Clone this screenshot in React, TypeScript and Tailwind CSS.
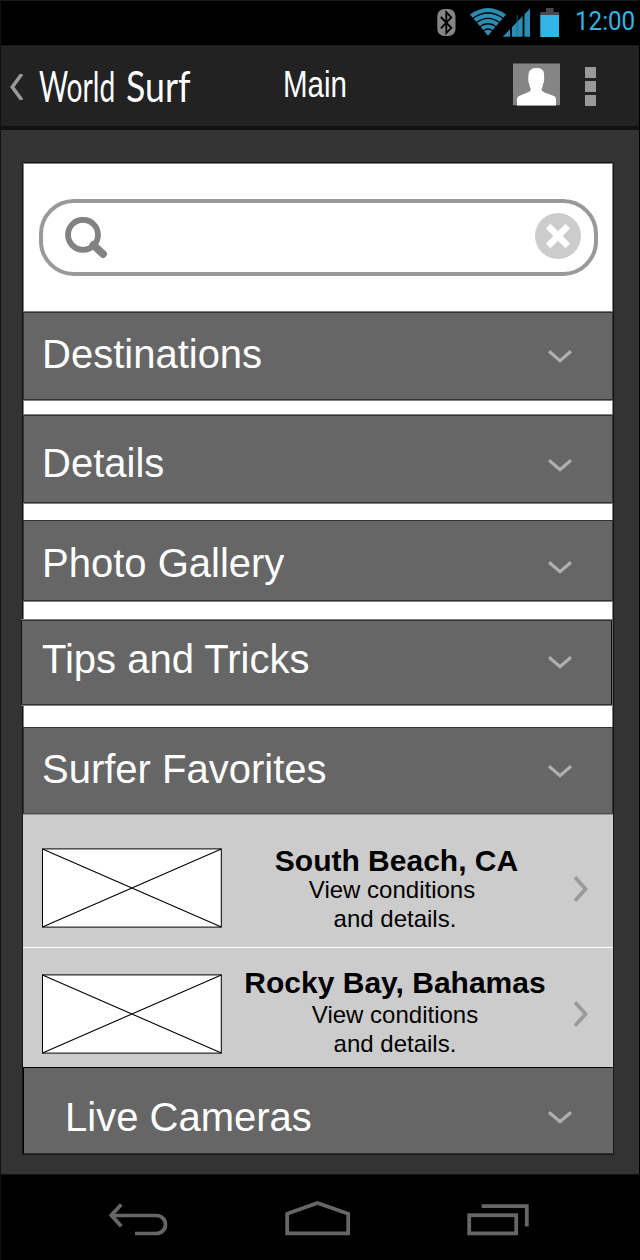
import React from "react";

type SectionProps = {
  title: string;
  box: string;
  label: string;
  chevron: string;
};

function ChevronDown({ className }: { className: string }) {
  return (
    <svg width="24" height="14" viewBox="0 0 24 14" className={"block shrink-0 " + className}>
      <path d="M1 1.3 L12 10.6 L23 1.3" fill="none" stroke="#b0b0b0" strokeWidth="3.2" />
    </svg>
  );
}

function Section({ title, box, label, chevron }: SectionProps) {
  return (
    <button className={"flex shrink-0 items-start justify-between border bg-[#666] pr-[40px] text-left " + box}>
      <span className={"whitespace-nowrap text-[40px] leading-[40px] text-white " + label}>{title}</span>
      <ChevronDown className={chevron} />
    </button>
  );
}

function Placeholder({ className }: { className: string }) {
  return (
    <svg width="180" height="80" viewBox="0 0 180 80" className={"block shrink-0 " + className}>
      <rect x="0.5" y="0.9" width="178.8" height="78.2" fill="#fff" stroke="#000" strokeWidth="1" />
      <path d="M0.5 0.9 L179.3 79.1 M0.5 79.1 L179.3 0.9" stroke="#000" strokeWidth="1.1" />
    </svg>
  );
}

type FavoriteProps = {
  title: string;
  box: string;
  image: string;
  text: string;
  heading: string;
  sub: string;
  first: string;
  chevron: string;
};

function Favorite(props: FavoriteProps) {
  return (
    <div className={"flex shrink-0 items-start bg-[#ccc] pl-[19px] " + props.box}>
      <Placeholder className={props.image} />
      <div className={"flex w-[346px] shrink-0 flex-col items-center whitespace-nowrap text-black " + props.text}>
        <h3 className={"text-[30px] leading-[30px] font-bold " + props.heading}>{props.title}</h3>
        <div className={"flex flex-col items-center text-[24px] leading-[29px] " + props.sub}>
          <span className={props.first}>View conditions</span>
          <span>and details.</span>
        </div>
      </div>
      <svg width="16" height="26" viewBox="0 0 16 26" className={"block shrink-0 " + props.chevron}>
        <path d="M2 1.2 L12.6 13 L2 24.8" fill="none" stroke="#999" strokeWidth="3.6" />
      </svg>
    </div>
  );
}

function StatusBar() {
  return (
    <div className="flex h-[46px] shrink-0 items-start border-t border-b border-[#1a1a1a] bg-black pl-[436px]">
      <svg width="130" height="40" viewBox="437 1 130 40" className="block shrink-0">
        <rect x="437.3" y="9" width="18.2" height="27" rx="7" fill="#858585" />
        <path d="M440.8 17 L451.3 27.8 L446.3 33 V12.3 L451.3 17.5 L440.8 28.3" fill="none" stroke="#000" strokeWidth="1.8" />
        <path d="M470 14.5 Q488 1.5 506 14.5 L488 35.7 Z" fill="#2b8db3" />
        <g fill="none" stroke="#000" strokeWidth="1.3">
          <path d="M472.5 18.5 Q488 7.5 503.5 18.5" />
          <path d="M476 22.8 Q488 14 500 22.8" />
          <path d="M479.5 27 Q488 20.5 496.5 27" />
          <path d="M483 31 Q488 27 493 31" />
        </g>
        <path d="M502.7 36.8 L530 8.5 V36.8 Z" fill="#2b8db3" />
        <path d="M511 8 V37 M523.5 8 V37" stroke="#000" strokeWidth="1.8" />
        <path d="M517.2 15 V37" stroke="#1f6f8e" strokeWidth="0.8" />
        <path d="M540.3 15 V12 H546 V8 H553.5 V12 H559 V15 Z" fill="#484848" />
        <rect x="540.3" y="15" width="18.7" height="22" fill="#33b5e5" />
      </svg>
      <div className="mt-[5px] ml-[8px] w-[66px]">
        <span className="inline-block origin-left scale-x-[0.93] font-['Roboto'] text-[26px] leading-[30px] font-normal whitespace-nowrap text-[#33b5e5]">
          12:00
        </span>
      </div>
    </div>
  );
}

function Header() {
  return (
    <header className="flex h-[84px] shrink-0 items-start border-b-4 border-[#111] bg-[#222] pl-[9px]">
      <svg width="14" height="26" viewBox="0 0 14 26" className="mt-[28px] block shrink-0">
        <path d="M11.8 0 L2.3 13 L11.8 26" fill="none" stroke="#999" strokeWidth="3.6" />
      </svg>
      <h1 className="mt-[15px] ml-[15px] flex w-[160px] shrink-0 font-['Lato'] text-[43px] leading-[50px] whitespace-nowrap text-white">
        <span className="w-[87px] shrink-0">
          <span className="inline-block origin-left scale-x-[0.655]">World</span>
        </span>{" "}
        <span className="w-[70px] shrink-0">
          <span className="inline-block origin-left scale-x-[0.83]">Surf</span>
        </span>
      </h1>
      <div className="mt-[19px] ml-[84px] w-[80px] shrink-0">
        <span className="inline-block origin-left scale-x-[0.82] text-[36px] leading-[40px] whitespace-nowrap text-white">Main</span>
      </div>
      <svg width="48" height="43" viewBox="0 0 48 43" className="mt-[17px] ml-[150px] block shrink-0">
        <rect y="0.5" width="47" height="41.7" fill="#858585" />
        <path
          d="M4 42.5 V35.5 Q4 34 6 33 L14.5 29.6 Q18 28 17.8 26.5 Q16.6 24 16.3 21 Q15 19.5 15.2 16.5 L15.6 10.5 Q16.5 5 23.5 5 Q30.5 5 31 10.5 L31.2 16.5 Q31.4 19.5 30 21 Q29.8 24 28.4 26.5 Q28.4 28 31.5 29.6 L41 33 Q43 34 43 35.5 V42.5 Z"
          fill="#fff"
        />
      </svg>
      <div className="mt-[21px] ml-[24px] flex flex-col gap-[3px]">
        <span className="h-[11px] w-[11px] bg-[#999]" />
        <span className="h-[11px] w-[11px] bg-[#999]" />
        <span className="h-[11px] w-[11px] bg-[#999]" />
      </div>
    </header>
  );
}

function SearchBox() {
  return (
    <div className="mt-[36px] ml-[16px] flex h-[77px] w-[559px] shrink-0 items-start rounded-[35px] border-4 border-[#999] bg-white">
      <svg width="44" height="42" viewBox="0 0 44 42" className="mt-[14px] ml-[21px] block shrink-0">
        <circle cx="19" cy="17.8" r="15" fill="none" stroke="#828282" strokeWidth="5.8" />
        <path d="M29.5 28 L39 37" stroke="#828282" strokeWidth="7.8" strokeLinecap="round" />
      </svg>
      <input aria-label="Search" className="h-full w-[427px] min-w-0 bg-transparent px-4 text-[28px] outline-none" />
      <svg width="46" height="46" viewBox="0 0 46 46" className="mt-[10px] block shrink-0">
        <circle cx="23" cy="23" r="23" fill="#ccc" />
        <path d="M13.2 13.2 L32.8 32.8 M32.8 13.2 L13.2 32.8" stroke="#fff" strokeWidth="6.6" />
      </svg>
    </div>
  );
}

function NavBar() {
  return (
    <nav className="flex h-[86px] shrink-0 items-start border-t border-[#111] bg-black pt-[25px] pl-[107px]">
      <svg width="62" height="36" viewBox="108 1200 62 36" className="block shrink-0">
        <path d="M111 1215.5 H156.5 A9 9 0 0 1 156.5 1233.5 H135" fill="none" stroke="#666" strokeWidth="3.6" />
        <path d="M121.3 1204.5 L111.3 1215.3 L121.3 1226.2" fill="none" stroke="#666" strokeWidth="3.8" />
      </svg>
      <svg width="68" height="36" viewBox="284 1200 68 36" className="ml-[114px] block shrink-0">
        <path d="M287.2 1213.8 L317.5 1203 L348.2 1213.8 V1233.4 H287.2 Z" fill="none" stroke="#666" strokeWidth="3.8" />
      </svg>
      <svg width="64" height="36" viewBox="466 1200 64 36" className="ml-[114px] block shrink-0">
        <rect x="469.2" y="1215.2" width="47" height="18.2" fill="none" stroke="#666" strokeWidth="3.8" />
        <path d="M481.7 1206.2 H526.8 V1226.5" fill="none" stroke="#666" strokeWidth="3.8" />
      </svg>
    </nav>
  );
}

const line = "border-[#333] shadow-[0_1px_0_#808080,0_-1px_0_#808080] ";

export default function App() {
  return (
    <div className="flex h-[1260px] w-[640px] flex-col overflow-hidden border-r border-l border-r-black border-l-[#111] bg-[#333] font-['Liberation_Sans',sans-serif]">
      <StatusBar />
      <Header />
      <main className="flex h-[1044px] shrink-0 flex-col pt-[32px] pl-[21px]">
        <div className="flex h-[993px] w-[592px] flex-col border border-[#161616] bg-white shadow-[inset_0_0_0_1px_#808080]">
          <SearchBox />
          <Section title="Destinations" box={line + "mt-[36px] h-[88px]"} label="ml-[18px] mt-[21px]" chevron="mt-[37px]" />
          <Section title="Details" box={line + "mt-[15px] h-[88px]"} label="ml-[18px] mt-[27px]" chevron="mt-[43px]" />
          <Section title="Photo Gallery" box="border-[#333] shadow-[0_1px_0_#808080] mt-[17px] h-[81px]" label="ml-[18px] mt-[22px]" chevron="mt-[40px]" />
          <Section
            title="Tips and Tricks"
            box="border-x-[#0d0d0d] border-y-[#333] shadow-[0_1px_0_#808080,0_-1px_0_#808080,1px_0_0_#666] mt-[19px] -ml-[2px] h-[85px] w-[591px]"
            label="ml-[20px] mt-[18px]"
            chevron="mt-[35px] -mr-px"
          />
          <Section title="Surfer Favorites" box="border-[#333] border-b-[#4a4a4a] shadow-[0_1px_0_#999] mt-[22px] h-[87px]" label="ml-[18px] mt-[21px]" chevron="mt-[37px]" />
          <Favorite
            title="South Beach, CA"
            box="mt-px h-[132px]"
            image="mt-[33px]"
            text="mt-[31px]"
            heading="ml-[3px]"
            sub="-mt-px"
            first="-ml-[6px]"
            chevron="mt-[61px] ml-[5px]"
          />
          <Favorite
            title="Rocky Bay, Bahamas"
            box="mt-px h-[119px] shadow-[0_-1px_0_#fff]"
            image="mt-[26px]"
            text="mt-[20px]"
            heading=""
            sub="mt-[2px]"
            first=""
            chevron="mt-[53px] ml-[5px]"
          />
          <Section title="Live Cameras" box="h-[87px] border-x-black border-r-[#666] border-t-black border-b-[#333]" label="ml-[41px] mt-[29px]" chevron="mt-[43px]" />
        </div>
      </main>
      <NavBar />
    </div>
  );
}
